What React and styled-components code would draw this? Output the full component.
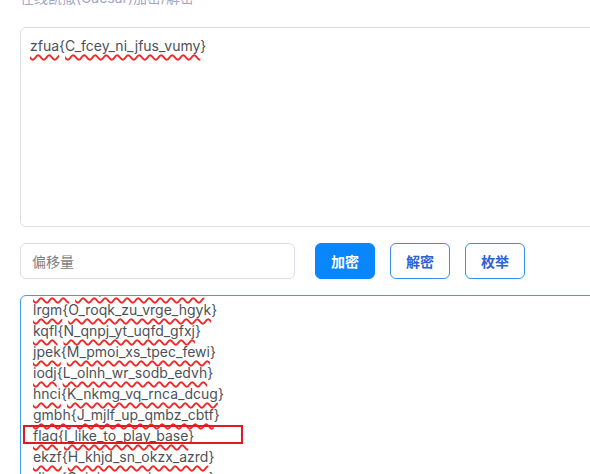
import styled, { createGlobalStyle } from "styled-components";

const GlobalStyle = createGlobalStyle`
  html, body {
    margin: 0;
    padding: 0;
    background: #ffffff;
    overflow: hidden;
  }
  body {
    font-family: Inter, "Noto Sans CJK SC", sans-serif;
  }
`;

const Page = styled.div`
  width: 590px;
  height: 474px;
  overflow: hidden;
  padding-left: 20px;
  box-sizing: border-box;
`;

const Title = styled.div`
  margin-top: -10px;
  height: 16px;
  line-height: 16px;
  font-size: 14px;
  color: #a3a6c4;
`;

const TextBox = styled.div`
  margin-top: 21px;
  width: 600px;
  height: 200px;
  box-sizing: border-box;
  border: 1px solid #dcdfe6;
  border-radius: 6px;
  padding: 7px 9px;
  font-size: 14px;
  line-height: 21px;
  color: #4c5158;
`;

const Word = styled.span`
  text-decoration: underline wavy #f02828;
  text-decoration-thickness: 1.5px;
  text-underline-offset: 3px;
  text-decoration-skip-ink: none;
`;

const Controls = styled.div`
  display: flex;
  align-items: center;
  gap: 15px;
  margin-top: 16px;
`;

const OffsetInput = styled.div`
  width: 275px;
  height: 36px;
  box-sizing: border-box;
  border: 1px solid #dcdfe6;
  border-radius: 6px;
  padding: 0 11px;
  margin-right: 5px;
  display: flex;
  align-items: center;
  font-size: 14px;
  color: #7c8086;
`;

const Button = styled.div`
  width: 60px;
  height: 36px;
  box-sizing: border-box;
  border-radius: 6px;
  border: 1px solid ${({ $primary }) => ($primary ? "#0a86fc" : "#3a8ef0")};
  background: ${({ $primary }) => ($primary ? "#0a86fc" : "#ffffff")};
  color: ${({ $primary }) => ($primary ? "#ffffff" : "#2f62d6")};
  font-size: 14px;
  font-weight: 700;
  display: flex;
  align-items: center;
  justify-content: center;
`;

const ResultBox = styled.div`
  margin-top: 16px;
  width: 600px;
  height: 200px;
  box-sizing: border-box;
  border: 1px solid #409cf0;
  border-radius: 6px;
  overflow: hidden;
  font-size: 14px;
  line-height: 21px;
  color: #4c5158;
`;

const Lines = styled.div`
  margin-top: -18px;
  padding-left: 12px;
`;

const Line = styled.div`
  position: relative;
  height: 21px;
  white-space: nowrap;
  ${({ $marked }) =>
    $marked &&
    `
    &::after {
      content: "";
      position: absolute;
      left: -10px;
      top: 0;
      width: 220px;
      height: 19px;
      border: 2px solid #e01a22;
      box-sizing: border-box;
    }
  `}
`;

function Cipher({ text }) {
  const m = text.match(/^(\w+)\{(.*)\}$/);
  return (
    <>
      <Word>{m[1]}</Word>
      {"{"}
      <Word>{m[2]}</Word>
      {"}"}
    </>
  );
}

const results = [
  "mshn{P_sprl_av_wshf_ihzl}",
  "lrgm{O_roqk_zu_vrge_hgyk}",
  "kqfl{N_qnpj_yt_uqfd_gfxj}",
  "jpek{M_pmoi_xs_tpec_fewi}",
  "iodj{L_olnh_wr_sodb_edvh}",
  "hnci{K_nkmg_vq_rnca_dcug}",
  "gmbh{J_mjlf_up_qmbz_cbtf}",
  "flag{I_like_to_play_base}",
  "ekzf{H_khjd_sn_okzx_azrd}",
  "djye{G_jgic_rm_njyw_zyqc}",
];

export default function App() {
  return (
    <Page>
      <GlobalStyle />
      <Title>在线凯撒(Caesar)加密/解密</Title>
      <TextBox>
        <Cipher text="zfua{C_fcey_ni_jfus_vumy}" />
      </TextBox>
      <Controls>
        <OffsetInput>偏移量</OffsetInput>
        <Button $primary>加密</Button>
        <Button>解密</Button>
        <Button>枚举</Button>
      </Controls>
      <ResultBox>
        <Lines>
          {results.map((r) => (
            <Line key={r} $marked={r.startsWith("flag")}>
              <Cipher text={r} />
            </Line>
          ))}
        </Lines>
      </ResultBox>
    </Page>
  );
}
